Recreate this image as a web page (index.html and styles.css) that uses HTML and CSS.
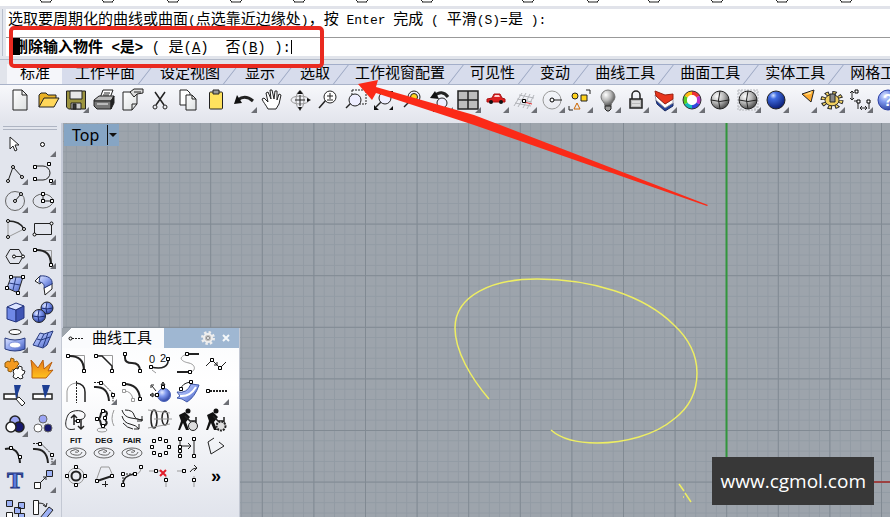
FILE: index.html
```
<!DOCTYPE html>
<html lang="zh-CN">
<head>
<meta charset="utf-8">
<title>Top</title>
<link rel="stylesheet" href="styles.css">
</head>
<body>
<svg class="defs" aria-hidden="true">
  <defs>
    <linearGradient id="blue" x1="0" y1="0" x2="1" y2="1"><stop offset="0" stop-color="#dfe6ff"/><stop offset=".5" stop-color="#8fa4ee"/><stop offset="1" stop-color="#3c56b8"/></linearGradient>
    <radialGradient id="ball" cx=".35" cy=".3" r=".75"><stop offset="0" stop-color="#e4eaff"/><stop offset=".4" stop-color="#7f98ee"/><stop offset="1" stop-color="#2a3f9c"/></radialGradient>
    <radialGradient id="deep" cx=".35" cy=".25" r=".8"><stop offset="0" stop-color="#cfe0ff"/><stop offset=".25" stop-color="#3f6be0"/><stop offset="1" stop-color="#06186e"/></radialGradient>
    <radialGradient id="gray" cx=".35" cy=".3" r=".75"><stop offset="0" stop-color="#fff"/><stop offset=".5" stop-color="#b5b5b5"/><stop offset="1" stop-color="#444"/></radialGradient>
    <linearGradient id="fire" x1="0" y1="0" x2="0" y2="1"><stop offset="0" stop-color="#e8791a"/><stop offset="1" stop-color="#ffc21c"/></linearGradient>
    <linearGradient id="paper" x1="0" y1="0" x2="1" y2="1"><stop offset="0" stop-color="#fff"/><stop offset="1" stop-color="#dcdfe0"/></linearGradient>
  </defs>
</svg>

<div class="menubar">
  <svg width="890" height="6" aria-hidden="true">
    <g id="m"><path d="M40 0l2 2M52 0l-2 2M41 2h10" /></g>
    <use href="#m" x="62"/><use href="#m" x="127"/><use href="#m" x="190"/><use href="#m" x="253"/><use href="#m" x="316"/><use href="#m" x="381"/><use href="#m" x="482"/><use href="#m" x="547"/><use href="#m" x="608"/><use href="#m" x="671"/><use href="#m" x="736"/><use href="#m" x="800"/>
  </svg>
</div>

<section class="command">
  <p class="history">选取要周期化的曲线或曲面<i>(</i>点选靠近边缘处<i>)</i>，按<i> Enter </i>完成<i> ( </i>平滑<i>(S)=</i>是<i> ):</i></p>
  <div class="prompt">
    <label for="cmd"><b><mark>删</mark>除输入物件<i> &lt;</i>是<i>&gt;</i></b></label><span class="opts"><i> ( </i><a href="#">是<i>(<u>A</u>)</i></a><i>  </i><a href="#">否<i>(<u>B</u>)</i></a><i> ):</i></span><span class="caret"></span>
    <input id="cmd" type="text">
  </div>
  <div class="callout"></div>
</section>

<nav class="tabs">
  <a class="on" href="#">标准</a><a href="#">工作平面</a><a href="#">设定视图</a><a href="#">显示</a><a href="#">选取</a><a href="#">工作视窗配置</a><a href="#">可见性</a><a href="#">变动</a><a href="#">曲线工具</a><a href="#">曲面工具</a><a href="#">实体工具</a><a href="#">网格工具</a>
</nav>

<div class="toolbar">
  <button aria-label="新建"><svg viewBox="0 0 28 28"><path fill="url(#paper)" d="M7 4h9l5 5v15H7z"/><path d="M16 4v5h5"/></svg></button>
  <button aria-label="打开"><svg viewBox="0 0 28 28"><path fill="#e9b125" d="M5 21V9l2-2h5l2 2h8v4"/><path fill="#ffd75a" d="M5 21l5-9h15l-5 9z"/></svg></button>
  <button class="fly" aria-label="保存"><svg viewBox="0 0 28 28"><path fill="#9c9440" d="M4.500 5h19v18h-17l-2-2z"/><path fill="#e8e8e8" d="M8 5h12v8H8z"/><path fill="#ccc" d="M9 17h10v6H9z"/><path fill="#333" d="M11 18h3v5h-3z"/></svg></button>
  <button aria-label="打印"><svg viewBox="0 0 28 28"><path fill="#fff" d="M10 12l3-8h10l-3 8z"/><path fill="#bbb" d="M4 14l5-4h15l-3 5H4z"/><path fill="#777" d="M4 15h17v8H7l-3-3z"/><path fill="#222" d="M21 15l3-5v7l-3 6z"/><path stroke="#fff" d="M7 18h11"/><path d="M14 7h6M13 9h6"/></svg></button>
  <button aria-label="属性"><svg viewBox="0 0 28 28"><path fill="url(#paper)" d="M5 6h14v12l-5 6H5z"/><path d="M14 24v-6h5"/><path fill="#ddd" d="M12 6l4-3h9v4l-6 1-3 3z"/><path d="M16 6h7"/></svg></button>
  <button aria-label="剪切"><svg viewBox="0 0 28 28"><path class="t" d="M9 6l9 13M19 6l-9 13"/><circle cx="9" cy="21" r="2"/><circle cx="19" cy="21" r="2"/></svg></button>
  <button aria-label="复制"><svg viewBox="0 0 28 28"><path fill="#fff" d="M6 4h7l3 3v12H6z"/><path fill="url(#paper)" d="M12 9h6l4 4v11H12z"/><path d="M18 9v4h4"/></svg></button>
  <button aria-label="粘贴"><svg viewBox="0 0 28 28"><rect x="7.500" y="6" width="13" height="17" rx="1" fill="#ffe25e"/><path fill="#999" d="M11 4h6v4h-6z"/></svg></button>
  <button class="fly" aria-label="撤销"><svg viewBox="0 0 28 28"><path class="t3" d="M8 14q7-6 15 1"/><path class="f" d="M4 18l3-9 5 8z"/></svg></button>
  <button aria-label="平移"><svg viewBox="0 0 28 28"><path fill="#fff" d="M10 23c-2-4-5-7-6-10l2-1 4 4-2-9 2-1 3 7-1-9h2l2 9 1-8h2v9l2-6 2 1-2 9-3 5z"/></svg></button>
  <button aria-label="旋转"><svg viewBox="0 0 28 28"><ellipse class="g" cx="14" cy="14" rx="9" ry="4"/><ellipse class="g" cx="14" cy="14" rx="4" ry="9"/><path d="M14 9v11M9 14h10"/><path class="f" d="M14 4l3 4h-6zM25 14l-4 2v-4zM14 25l-2-4h4z"/></svg></button>
  <button aria-label="缩放"><svg viewBox="0 0 28 28"><path class="t" d="M5 22l7-8"/><circle cx="16" cy="11" r="6" fill="#fff"/><path d="M13 10h6M16 7v6M13 14h6"/></svg></button>
  <button aria-label="框选缩放"><svg viewBox="0 0 28 28"><path class="d" d="M10 4h14v14H10z"/><path class="t" d="M4 22l6-6"/><circle cx="13" cy="14" r="6" fill="#eef"/></svg></button>
  <button aria-label="缩放至最大范围"><svg viewBox="0 0 28 28"><path class="t" d="M6 21l7-7"/><circle cx="15" cy="12" r="6" fill="#eef"/><path class="f" d="M4 24v-5l5 5zM23 5v5l-5-5zM23 24h-4l4-4z"/></svg></button>
  <button aria-label="缩放至选取物件"><svg viewBox="0 0 28 28"><path class="t" d="M6 21l7-7"/><circle cx="16" cy="11" r="6" fill="#eef"/><circle cx="16" cy="11" r="3.500" fill="#ffd21c"/></svg></button>
  <button class="fly" aria-label="还原视图"><svg viewBox="0 0 28 28"><path class="t3" d="M8 10q8-7 14 1"/><path class="f" d="M4 12l5-7 4 8z"/><circle cx="16" cy="17" r="5" fill="#eef"/><path d="M12 21l-5 5"/></svg></button>
  <button class="fly" aria-label="四个工作视窗"><svg viewBox="0 0 28 28"><path class="t" fill="#bdbdbd" d="M4 5h20v18H4zM14 5v18M4 14h20"/></svg></button>
  <button class="fly" aria-label="车辆"><svg viewBox="0 0 28 28"><path fill="#dc2020" stroke="#a11" d="M5 16v-3l5-1 2-4h6l2 4 3 1v3z"/><path fill="#fcc" stroke="none" d="M12 11l1-2h4l1 2z"/><circle class="f" cx="9" cy="16" r="2"/><circle class="f" cx="19" cy="16" r="2"/></svg></button>
  <button class="fly" aria-label="工作平面"><svg viewBox="0 0 28 28"><path stroke="#b3b5ba" d="M4 20L12 7M8 21l8-14M13 22l7-14M17 23l7-14M9 9l15 3M7 13l15 3M5 17l16 3"/><path stroke="#d33" d="M14 16l8 2"/><path class="p" d="M12.500 13.500h3v3h-3z"/></svg></button>
  <button class="fly" aria-label="圆"><svg viewBox="0 0 28 28"><circle class="g" cx="14" cy="14" r="9"/><path d="M14 14h10"/><circle class="p" cx="14" cy="14" r="2"/></svg></button>
  <button class="fly" aria-label="选取"><svg viewBox="0 0 28 28"><circle cx="9" cy="10" r="3" fill="#ffd21c"/><path fill="#ffd21c" d="M15 9h6v6h-6z"/><path stroke="#c60" d="M11 17l3 6H8z"/><path d="M20 4h4v4M3 20v4h4"/></svg></button>
  <button class="fly" aria-label="隐藏"><svg viewBox="0 0 28 28"><path fill="url(#gray)" stroke="#777" d="M11 20c0-4-4-5-4-9a7 7 0 0 1 14 0c0 4-4 5-4 9z"/><path fill="#999" d="M11 20h6v3l-2 2h-2l-2-2z"/></svg></button>
  <button class="fly" aria-label="锁定"><svg viewBox="0 0 28 28"><path class="t" d="M10 13V9a4 4 0 0 1 8 0v4"/><path class="t" fill="#bbb" d="M8 13h12v9H8z"/><path stroke="#fff" d="M10 16h8M10 19h8"/></svg></button>
  <button class="fly" aria-label="图层"><svg viewBox="0 0 28 28"><path fill="#24439c" stroke="#1b2b60" d="M6 14l9 8 8-5v3l-8 5-8-7z"/><path fill="#fff" stroke="#99a" d="M5 9l10 9 8-5v4l-8 5-9-8z"/><path fill="#e8351d" stroke="#9b2010" d="M5 5l10 4 8-1v5l-8 5L6 10z"/></svg></button>
  <button class="fly" aria-label="颜色"><svg class="wheel" viewBox="0 0 28 28"><path stroke="#e33" d="M14 7a7 7 0 0 1 6 3.500"/><path stroke="#b3c" d="M20 10.500a7 7 0 0 1 0 7"/><path stroke="#34d" d="M20 17.500a7 7 0 0 1-6 3.500"/><path stroke="#1bb" d="M14 21a7 7 0 0 1-6-3.500"/><path stroke="#5c2" d="M8 17.500a7 7 0 0 1 0-7"/><path stroke="#fb1" d="M8 10.500a7 7 0 0 1 6-3.500"/><circle cx="14" cy="14" r="5" fill="#fff" stroke="none"/><circle class="rim" cx="14" cy="14" r="9"/></svg></button>
  <button aria-label="着色"><svg viewBox="0 0 28 28"><circle cx="14" cy="14" r="9" fill="url(#gray)"/><path d="M5 14q9 3 18 0M14 5q-3 9 0 18"/></svg></button>
  <button class="fly" aria-label="半透明"><svg viewBox="0 0 28 28"><path class="d" stroke="#b5b7bc" d="M4 4h20v20H4zM4 7h20M4 21h20M7 4v20M21 4v20"/><circle cx="14" cy="14" r="9" fill="url(#gray)"/><path d="M5 14q9 3 18 0M14 5q-3 9 0 18"/></svg></button>
  <button class="fly" aria-label="渲染"><svg viewBox="0 0 28 28"><circle cx="14" cy="14" r="9" fill="url(#deep)"/></svg></button>
  <button class="fly" aria-label="灯光"><svg viewBox="0 0 28 28"><path fill="#ffab2e" d="M12 8l12-4-3 12z"/><path fill="#ffe08a" stroke="none" d="M14 9l8-4-1 3z"/></svg></button>
  <button class="fly" aria-label="选项"><svg viewBox="0 0 28 28"><g transform="translate(0 3) scale(1 .8)"><circle cx="14" cy="14" r="9" stroke="#222" stroke-width="5" stroke-dasharray="4 3.070"/><circle cx="14" cy="14" r="9" stroke="#f3d568" stroke-width="3" stroke-dasharray="2 5.070" stroke-dashoffset="-1"/><circle cx="14" cy="14" r="7" fill="#f0cf60"/></g><path fill="#888" d="M12 8h5v8h-5z"/></svg></button>
  <button class="fly" aria-label="尺寸标注"><svg viewBox="0 0 28 28"><path d="M6 5v9M4 7l2-2 2 2M4 12l2 2 2-2M8 15h4v8M23 15v8M14 22h7M16 20l-2 2 2 2M19 20l2 2-2 2"/><path class="p" d="M9 4h3v3H9zM11 14h3v3h-3zM21 14h3v3h-3z"/></svg></button>
  <button aria-label="说明"><svg viewBox="0 0 28 28"><circle cx="14" cy="14" r="10" fill="url(#ball)" stroke="#2b3fa5"/><text class="help" x="14" y="20">?</text></svg></button>
</div>

<main class="work">
  <aside class="side">
    <button aria-label="选取"><svg viewBox="0 0 28 28"><path fill="#fff" d="M9 7v12l3-3 2 5 2-1-2-5h4z"/></svg></button>
    <button class="fly" aria-label="点"><svg viewBox="0 0 28 28"><circle class="p" cx="13.500" cy="14.500" r="2"/></svg></button>
    <button class="fly" aria-label="多重直线"><svg viewBox="0 0 28 28"><path d="M7 23l5-14 9 10"/><circle class="p" cx="7" cy="23" r="1.500"/><circle class="p" cx="12" cy="9" r="1.500"/><circle class="p" cx="21" cy="19" r="1.500"/></svg></button>
    <button class="fly" aria-label="曲线"><svg viewBox="0 0 28 28"><path d="M6 8h8a7 7 0 0 1 0 14H6"/><path class="p" d="M4.500 7.500h3v3h-3zM18.500 4.500h3v3h-3zM4.500 19.500h3v3h-3zM20.500 21.500h3v3h-3z"/></svg></button>
    <button class="fly" aria-label="圆"><svg viewBox="0 0 28 28"><circle class="m" cx="14" cy="15" r="9.500"/><path d="M14 15l6-7"/><circle class="p" cx="14" cy="15" r="1.500"/><circle class="p" cx="20" cy="8" r="1.500"/></svg></button>
    <button class="fly" aria-label="椭圆"><svg viewBox="0 0 28 28"><ellipse class="m" cx="14" cy="15" rx="10" ry="7"/><path d="M14 8v7h9"/><path class="p" d="M12.500 6.500h3v3h-3zM12.500 13.500h3v3h-3zM21.500 13.500h3v3h-3z"/></svg></button>
    <button class="fly" aria-label="圆弧"><svg viewBox="0 0 28 28"><path class="g" d="M23 15L7 23V7"/><path class="t" d="M7 7q12 0 16 8"/><circle class="p" cx="7" cy="7" r="1.500"/><circle class="p" cx="23" cy="15" r="1.500"/><circle class="p" cx="7" cy="23" r="1.500"/></svg></button>
    <button class="fly" aria-label="矩形"><svg viewBox="0 0 28 28"><path d="M5.500 9.500h17v11h-17z"/><circle class="p" cx="22.500" cy="9.500" r="1.500"/><circle class="p" cx="5.500" cy="20.500" r="1.500"/></svg></button>
    <button class="fly" aria-label="多边形"><svg viewBox="0 0 28 28"><path d="M5 14.500l4-7h9l4 7-4 7H9zM13 14.500h9"/><circle class="p" cx="13" cy="14.500" r="1.500"/><circle class="p" cx="22" cy="14.500" r="1.500"/></svg></button>
    <button class="fly" aria-label="圆角"><svg viewBox="0 0 28 28"><path class="g" d="M6 8.500h16.500V23"/><path class="t2" d="M6 8q16-1 16 15"/><path class="p" d="M4.500 6.500h3v3h-3zM20.500 21.500h3v3h-3z"/></svg></button>
    <button class="fly" aria-label="曲面"><svg viewBox="0 0 28 28"><path fill="url(#blue)" d="M10 7h12l-5 16-11-5z"/><path stroke="#26397c" d="M8 13l11 2M15 7l-3 13"/><path class="p" d="M8.500 5.500h3v3h-3zM20.500 5.500h3v3h-3zM15.500 21.500h3v3h-3zM4.500 16.500h3v3h-3z"/></svg></button>
    <button class="fly" aria-label="挤出曲面"><svg viewBox="0 0 28 28"><path fill="#fff" d="M6 11l5-5 3 1-3 7zM15 18l8-5v6l-7 6z"/><path fill="url(#blue)" stroke="#26397c" d="M11 6c8-1 13 3 12 8l-8 4c1-4-2-6-5-6z"/></svg></button>
    <button class="fly" aria-label="立方体"><svg viewBox="0 0 28 28"><path fill="#6f88e6" stroke="#24357f" d="M6 9l9 3v12l-9-3z"/><path fill="#dce4ff" stroke="#24357f" d="M6 9l9-4 8 3-8 4z"/><path fill="#4055b4" stroke="#24357f" d="M15 12l8-4v12l-8 4z"/></svg></button>
    <button class="fly" aria-label="球体"><svg viewBox="0 0 28 28"><circle cx="18" cy="10" r="6" fill="url(#ball)"/><circle cx="10" cy="18" r="6.500" fill="url(#ball)"/><path stroke="#1b2b70" d="M4 18q6 2 13 0M10 12q-2 6 0 12M12 10q6 2 12 0M18 4q-2 6 0 12"/></svg></button>
    <button class="fly" aria-label="实体编辑"><svg viewBox="0 0 28 28"><ellipse cx="14" cy="6" rx="6" ry="2.500" fill="#fff"/><path fill="url(#blue)" stroke="#26397c" d="M4 12q10 4 20 0v11q-10 4-20 0z"/><ellipse cx="14" cy="19" rx="6" ry="3" fill="#fff" stroke="#7a8ed8"/></svg></button>
    <button class="fly" aria-label="曲面编辑"><svg viewBox="0 0 28 28"><path fill="url(#blue)" stroke="#26397c" d="M4 19l7-12 4 1 9-3-6 14-4 3z"/><path stroke="#26397c" d="M8 13l4 1 9-3M9 20l6-12M14 21l5-14"/></svg></button>
    <button aria-label="组合"><svg viewBox="0 0 28 28"><path fill="#f39a21" stroke="#8b5a10" d="M4 9l3-2 2 1 1-4 3 1v3l3-1 2 3-2 2 1 4-3 1-2-2-2 3-3-1v-3l-3-1z"/><path fill="#fff" d="M12 17l3-3 2 1 1-3 3 1v3l3 1-1 3-2 1 1 3-3 1-2-2-2 2-3-2 1-3z"/></svg></button>
    <button aria-label="炸开"><svg viewBox="0 0 28 28"><path fill="url(#fire)" stroke="#b85f10" d="M3 24V14l-1-8 7 8 5-8 1 9 8-7-4 9 5-1-7 8z"/></svg></button>
    <button aria-label="修剪"><svg viewBox="0 0 28 28"><path class="t" fill="#fff" d="M3 12h13v5H3z"/><path fill="#fff" d="M15 17l3-2 6 6-3 3z"/><path fill="#1d3f94" stroke="none" d="M13 3h7l-5 14z"/></svg></button>
    <button aria-label="分割"><svg viewBox="0 0 28 28"><path class="t" fill="#fff" d="M4 12h19v5H4z"/><path fill="#1d3f94" stroke="none" d="M13 3h8l-5 14z"/></svg></button>
    <button class="fly" aria-label="群组"><svg viewBox="0 0 28 28"><g class="t"><circle cx="14" cy="11" r="5" fill="#9aa4f4"/><circle cx="18" cy="17" r="5" fill="#17186e"/><circle cx="10" cy="17" r="5" fill="#fff"/></g></svg></button>
    <button aria-label="解散群组"><svg viewBox="0 0 28 28"><g class="m"><circle cx="14" cy="9" r="4" fill="#9aa4f4"/><circle cx="9" cy="18" r="4" fill="#fff"/><circle cx="19" cy="18" r="4" fill="#17186e"/></g></svg></button>
    <button aria-label="编辑点"><svg viewBox="0 0 28 28"><path class="t2" d="M4 11q14-3 15 14"/><path class="p" d="M8.500 8.500h3v3h-3zM17.500 17.500h3v3h-3z"/></svg></button>
    <button class="fly" aria-label="控制点"><svg viewBox="0 0 28 28"><path class="t2" d="M4 11q14-1 15 14"/><path class="d" d="M4 5.500h8l11 11v8"/><path class="p" d="M9.500 4.500h3v3h-3zM21.500 15.500h3v3h-3z"/></svg></button>
    <button aria-label="文字"><svg viewBox="0 0 28 28"><text class="tt" x="14" y="22">T</text></svg></button>
    <button class="fly" aria-label="移动"><svg viewBox="0 0 28 28"><path d="M11 17l6-6M14 11h3v3"/><path fill="#9db1f4" d="M17.500 4.500h6v6h-6z"/><path fill="#fff" d="M5.500 16.500h6v6h-6z"/></svg></button>
    <button aria-label="阵列"><svg viewBox="0 0 28 28"><g fill="#9db1f4"><path d="M5.500 6.500h6v6h-6zM17.500 8.500h6v6h-6zM13.500 13.500h6v6h-6zM17.500 19.500h6v6h-6z"/></g><path fill="#fff" d="M5.500 18.500h6v6h-6z"/></svg></button>
    <button aria-label="定位"><svg viewBox="0 0 28 28"><path fill="#fff" d="M4.500 6.500h5v14h-5z"/><path d="M9 9q7 0 8 4M14 11l3 2 1-4"/><path fill="#9db1f4" d="M11 24l9-11 4 3-9 11z"/></svg></button>
  </aside>

  <div class="viewport">
    <svg class="canvas" aria-hidden="true">
      <defs>
        <pattern id="minor" x="44" y="49" width="10.320" height="10.320" patternUnits="userSpaceOnUse"><path d="M0 .5h11M.5 0v11"/></pattern>
        <pattern id="major" x="44" y="49" width="51.600" height="51.600" patternUnits="userSpaceOnUse"><path d="M0 .5h52M.5 0v52"/></pattern>
      </defs>
      <rect width="100%" height="100%" fill="url(#minor)"/>
      <rect width="100%" height="100%" fill="url(#major)"/>
      <path class="axis-y" d="M663.500 0v359"/>
      <path class="axis-x" d="M663 359h2000"/>
      <path class="curve" d="M426 276C408 255 392 228 392 205C392 172 430 156 474 156C528 156 581 172 611 202C626 216 634 233 634 250C634 268 627 284 611 296C592 312 562 320 534 320C512 320 497 315 488 307"/>
      <path class="curve" d="M616 361l5 7M622 370l6 9M620 374h1"/>
    </svg>
    <button class="view">Top<span></span></button>
    <div class="mark">www.cgmol.com</div>
  </div>

  <section class="panel">
    <header>
      <h2><svg viewBox="0 0 16 8"><path class="d" d="M4 4.500h12"/><circle class="p" cx="2.500" cy="4.500" r="1.500"/></svg>曲线工具</h2>
      <button aria-label="选项"><svg viewBox="0 0 14 14"><circle cx="7" cy="7" r="5.500" stroke="#eee" stroke-width="3" stroke-dasharray="2.300 2"/><circle cx="7" cy="7" r="4" fill="#bbb" stroke="#eee" stroke-width="2"/><circle cx="7" cy="7" r="1.500" fill="#fff" stroke="#888"/></svg></button>
      <button aria-label="关闭"><svg viewBox="0 0 14 14"><path stroke="#f4f7fa" stroke-width="2" d="M4 4l6 6M10 4l-6 6"/></svg></button>
    </header>
    <div class="grid">
      <button aria-label="圆角"><svg viewBox="0 0 28 28"><path class="g" d="M6 5.500h16.500V21"/><path class="t2" d="M6 6q16-1 16 15"/><path class="p" d="M4.500 4.500h3v3h-3zM20.500 19.500h3v3h-3z"/></svg></button>
      <button aria-label="斜角"><svg viewBox="0 0 28 28"><path class="g" d="M6 5.500h16.500V21"/><path class="t" d="M6 6h6l10 10v5"/><path class="p" d="M4.500 4.500h3v3h-3zM20.500 19.500h3v3h-3z"/></svg></button>
      <button aria-label="混接"><svg viewBox="0 0 28 28"><path class="t2" d="M7 4v4q0 5 7 5 8 0 8 8"/><path class="p" d="M5.500 2.500h3v3h-3zM20.500 19.500h3v3h-3z"/></svg></button>
      <button aria-label="可调式混接"><svg viewBox="0 0 28 28"><path class="t" d="M5 17c12 3 18-1 17-8"/><path class="g" d="M6 20l4 3"/><path class="p" d="M3.500 15.500h3v3h-3zM20.500 7.500h3v3h-3z"/><text x="6" y="13">0</text><text x="17" y="12">2</text></svg></button>
      <button aria-label="弧形混接"><svg viewBox="0 0 28 28"><path class="g" d="M13 4c-11 4-4 8 2 9 8 2 6 9 1 9"/><path class="t2" d="M14 4h11M3 22h12"/><path class="p" d="M11.500 2.500h3v3h-3zM14.500 20.500h3v3h-3z"/></svg></button>
      <button aria-label="衔接"><svg viewBox="0 0 28 28"><path d="M4 16l6-6 8 8 6-6M15 12v3h-3"/><path class="p" d="M8.500 8.500h3v3h-3zM16.500 16.500h3v3h-3z"/></svg></button>

      <button aria-label="对称"><svg viewBox="0 0 28 28"><path class="g" d="M5 24V13q1-7 9-8"/><path class="t" d="M14 5q9 1 9 9v10"/><path class="d" d="M14.500 3v22"/></svg></button>
      <button class="fly" aria-label="控制点曲线"><svg viewBox="0 0 28 28"><path class="t2" d="M4 9q14-1 15 14"/><path class="d" d="M4 4.500h8l11 11v8"/><path class="p" d="M9.500 3.500h3v3h-3zM21.500 15.500h3v3h-3z"/></svg></button>
      <button aria-label="偏移"><svg viewBox="0 0 28 28"><path class="t2" d="M6 6q15 0 16 15"/><path class="g" d="M6 13q8 0 9 9"/><path class="p" d="M4.500 4.500h3v3h-3zM20.500 19.500h3v3h-3z"/><path class="p g" d="M4.500 11.500h3v3h-3zM13.500 20.500h3v3h-3z"/></svg></button>
      <button aria-label="偏移曲面上的曲线"><svg viewBox="0 0 28 28"><circle cx="18" cy="17" r="6.500" fill="url(#ball)" stroke="#4b63ba"/><path d="M4 17h7M17 12V5M10 13L6 8M4 17l3-2v4zM17 4l-2 3h4zM5 7h3M5 7v3"/><path class="p" d="M9.500 15.500h3v3h-3zM15.500 7.500h3v3h-3z"/></svg></button>
      <button aria-label="曲面"><svg viewBox="0 0 28 28"><path fill="url(#blue)" stroke="#3e57a8" d="M3 14q10 2 14-8l8 1q-4 12-12 17-5-4-10-4l3-2z"/><path stroke="#fff" class="t2" d="M6 18q10 1 16-9"/><path d="M7 11q1-6 10-7"/><path class="p" d="M5.500 9.500h3v3h-3zM15.500 2.500h3v3h-3z"/></svg></button>
      <button class="fly" aria-label="延伸"><svg viewBox="0 0 28 28"><path class="d t2" d="M8 13h17"/><path class="p" d="M4.500 11.500h3v3h-3z"/></svg></button>

      <button aria-label="周期化"><svg viewBox="0 0 28 28"><path d="M13 23C1 26 3 15 6 9S24 3 23 10c-1 4-4 3-7 4"/><path class="t" d="M12 19V9M9 12l3-3 3 3M19 13v9M16 20l3 3 3-3M12 15h5"/><path class="p" d="M14.500 13.500h3v3h-3z"/></svg></button>
      <button aria-label="镜像"><svg viewBox="0 0 28 28"><path class="t2" d="M14 5c-6 2-1 6-6 8 5 2 0 6 6 8M15 5q4 2 0 6M15 14q4 3-1 6"/><path class="g" d="M24 4q-4 9 0 16"/><ellipse class="g" cx="12" cy="24" rx="5" ry="2"/><path class="p" d="M11.500 3.500h3v3h-3zM5.500 11.500h3v3h-3zM11.500 18.500h3v3h-3zM13.500 10.500h3v3h-3z"/></svg></button>
      <button aria-label="断面线"><svg viewBox="0 0 28 28"><path d="M4 4q2 7 9 8t11 2M4 10q2 7 8 8t9 5M7 4q8 0 9 5t9 5M24 10v5h-5M21 18v5h-5M5 17q4 5 10 6"/></svg></button>
      <button aria-label="均分曲线"><svg viewBox="0 0 28 28"><ellipse class="t" cx="8" cy="13" rx="3" ry="9"/><ellipse class="t" cx="19" cy="12" rx="3" ry="7"/><path class="g" d="M2 4l22 3M2 22l22-4M8 13h18"/></svg></button>
      <button aria-label="重建"><svg viewBox="0 0 28 28"><circle class="f" cx="14" cy="5" r="2.500"/><path class="f" d="M5 9l6-3 5 5-4 5 3 8h-3l-3-7-3 7H4l3-9z"/><path class="t" d="M11 10l5 5h6M22 11v7"/><circle cx="19" cy="20" r="4.500" fill="#ddd"/></svg></button>
      <button aria-label="主曲线重建"><svg viewBox="0 0 28 28"><circle class="f" cx="14" cy="5" r="2.500"/><path class="f" d="M5 9l6-3 5 5-4 5 3 8h-3l-3-7-3 7H4l3-9z"/><path class="t" d="M11 10l5 5h6M22 11v7"/><circle class="d t2" cx="19" cy="20" r="4.500" fill="#ddd"/></svg></button>

      <button aria-label="FIT"><svg viewBox="0 0 28 28"><text class="cap" x="14" y="9">FIT</text><ellipse class="m" cx="14" cy="19" rx="10" ry="5"/><path class="m" d="M20 18q-1 4-7 3t-4-4q5-3 8 0-1 2-4 1"/></svg></button>
      <button aria-label="DEG"><svg viewBox="0 0 28 28"><text class="cap" x="14" y="9">DEG</text><ellipse class="m" cx="14" cy="19" rx="10" ry="5"/><path class="m" d="M20 18q-1 4-7 3t-4-4q5-3 8 0-1 2-4 1"/></svg></button>
      <button aria-label="FAIR"><svg viewBox="0 0 28 28"><text class="cap" x="14" y="9">FAIR</text><ellipse class="m" cx="14" cy="19" rx="10" ry="5"/><path class="m" d="M20 18q-1 4-7 3t-4-4q5-3 8 0-1 2-4 1"/></svg></button>
      <button aria-label="封闭"><svg viewBox="0 0 28 28"><path class="p" d="M12.500 3.500h3v3h-3zM18.500 5.500h3v3h-3zM21.500 11.500h3v3h-3zM18.500 17.500h3v3h-3zM12.500 19.500h3v3h-3zM6.500 17.500h3v3h-3zM4.500 11.500h3v3h-3zM6.500 5.500h3v3h-3z"/></svg></button>
      <button aria-label="参数均匀化"><svg viewBox="0 0 28 28"><path d="M6 5v17M20 5v17M8 12h9M14 9l3 3-3 3"/><path class="p" d="M4.500 3.500h3v3h-3zM4.500 11.500h3v3h-3zM4.500 15.500h3v3h-3zM4.500 20.500h3v3h-3zM18.500 3.500h3v3h-3zM18.500 20.500h3v3h-3z"/></svg></button>
      <button aria-label="简化"><svg viewBox="0 0 28 28"><path d="M12 4L6 8l3 12 13-8-5-4"/></svg></button>

      <button aria-label="插入节点"><svg viewBox="0 0 28 28"><circle class="t2" cx="14" cy="14" r="4.500"/><circle class="g" cx="14" cy="14" r="8"/><path class="p" d="M12.500 3.500h3v3h-3zM12.500 21.500h3v3h-3zM3.500 12.500h3v3h-3zM21.500 12.500h3v3h-3z"/></svg></button>
      <button aria-label="插入锐角点"><svg viewBox="0 0 28 28"><path class="g" d="M6 19l5-14h8l4 9"/><path class="t2" d="M7 19l15-5"/><path d="M15.500 19v6M12 22.500h6"/><path class="p" d="M5.500 17.500h3v3h-3zM20.500 12.500h3v3h-3z"/></svg></button>
      <button aria-label="插入控制杆"><svg viewBox="0 0 28 28"><path class="d" d="M5 12v11M5 12h12"/><path class="t" d="M5 23q0-10 12-11"/><path class="g" d="M17 12q6 0 6-7"/><path class="p" d="M3.500 10.500h3v3h-3zM3.500 21.500h3v3h-3zM15.500 10.500h3v3h-3zM21.500 3.500h3v3h-3z"/></svg></button>
      <button aria-label="移除点"><svg viewBox="0 0 28 28"><path class="g" d="M3 9h12M20 14v11"/><path stroke="#e11d2a" stroke-width="2" d="M14 8l6 6M20 8l-6 6"/><path class="p" d="M8.500 7.500h3v3h-3zM18.500 16.500h3v3h-3z"/></svg></button>
      <button aria-label="移动点"><svg viewBox="0 0 28 28"><path class="g" d="M3 9h9M20 14v11"/><path d="M16 10q2-4 7-4M20 3l3 3-3 3"/><path class="p" d="M8.500 7.500h3v3h-3zM18.500 16.500h3v3h-3z"/></svg></button>
      <button class="more" aria-label="更多">»</button>
    </div>
  </section>
</main>

<svg class="arrow" width="360" height="140" viewBox="355 75 360 140" aria-hidden="true"><path d="M358 84l20-4-2 7 98 28 234 90-1 1-233-81-98-32-4 7z"/></svg>
</body>
</html>
```
FILE: styles.css
```
* { box-sizing: border-box; }

body {
  margin: 0;
  height: 100vh;
  display: flex;
  flex-direction: column;
  overflow: hidden;
  position: relative;
  background: #e4e7ee;
  color: #000;
  font: 15px/20px "Liberation Sans", "Noto Sans CJK SC", sans-serif;
}

a { color: inherit; text-decoration: none; }

button {
  position: relative;
  padding: 0;
  border: 0;
  background: none;
  font: inherit;
  color: inherit;
}

svg {
  display: block;
  fill: none;
  stroke: #222;
  stroke-width: 1;
}

.defs { position: absolute; width: 0; height: 0; }

/* icon strokes */
.t { stroke-width: 1.5; }
.t2 { stroke-width: 2; }
.t3 { stroke-width: 3; }
.p { fill: #fff; stroke: #000; }
.g { stroke: #999; }
.m { stroke: #666; }
.d { stroke-dasharray: 2 1; }
.f { fill: #111; stroke: none; }
.wheel path { stroke-width: 4; }
.wheel .rim { stroke: #333; }

svg text {
  fill: #111;
  stroke: none;
  font-size: 11px;
  text-anchor: middle;
}
svg .cap { font-size: 8px; font-weight: bold; }
svg .help { fill: #fff; font-size: 17px; font-weight: bold; }
svg .tt {
  fill: #5b7be0;
  stroke: #24357f;
  font: bold 24px "Liberation Serif", serif;
}

.menubar {
  height: 9px;
  flex: none;
  background: #fff;
  border-bottom: 3px solid #e1e3ea;
}

/* command line */
.command {
  position: relative;
  flex: none;
  margin-left: 6px;
  background: #fff;
  box-shadow: -3px 0 0 #e4e7ee, -4px 0 0 #b9bfcc;
}
.command i {
  font: 13px "Liberation Mono", monospace;
  white-space: pre;
}
.history {
  height: 29px;
  margin: 0;
  padding-left: 2px;
  border-bottom: 1px solid #999;
  white-space: nowrap;
}
.prompt {
  height: 18px;
  padding-left: 7px;
  display: flex;
  align-items: center;
  line-height: 18px;
  white-space: nowrap;
}
.prompt b { font-weight: 700; }
.prompt i { font-size: 14px; }
.prompt b i { font-weight: 700; }
.prompt mark {
  background: linear-gradient(90deg, #000 50%, transparent 50%);
  color: #000;
}
.prompt input {
  flex: 1;
  min-width: 0;
  height: 16px;
  padding: 0;
  border: 0;
  outline: 0;
  background: none;
}
.caret { width: 1px; height: 14px; background: #000; }
.callout {
  position: absolute;
  left: 3px;
  top: 17px;
  width: 315px;
  height: 42px;
  border: 4px solid #e92a20;
  border-radius: 5px;
  z-index: 3;
}

/* toolbar tabs */
.tabs {
  height: 29px;
  flex: none;
  display: flex;
  padding: 8px 0 0 7px;
  overflow: hidden;
  white-space: nowrap;
  background: linear-gradient(#e1e4eb 3px, #b4bbca 3px, #b4bbca 4px, #e1e4eb 4px);
  border-bottom: 1px solid #a8b2c8;
}
.tabs a {
  position: relative;
  flex: none;
  padding: 0 12px 0 13px;
  line-height: 16px;
  z-index: 0;
  background: #d7dcec;
  border-top: 1px solid #a3aec9;
}
.tabs a::before {
  content: "";
  position: absolute;
  z-index: -1;
  left: -2px;
  top: 0;
  width: 12px;
  height: 20px;
  background: #d7dcec;
  border-left: 1px solid #98a4c0;
  transform: skewX(-38deg);
}
.tabs .on { background: #f5f6fa; border-color: #f5f6fa; }
.tabs .on::before, .tabs .on + a::before { display: none; }

.toolbar {
  height: 38px;
  flex: none;
  display: flex;
  padding: 1px 0 0 6px;
  overflow: hidden;
  background: linear-gradient(#f7f8fb, #e2e4ec);
}
.toolbar button, .side button, .grid button { flex: none; width: 28px; height: 28px; }
.toolbar svg, .side svg, .grid svg { width: 28px; height: 28px; }
.fly::after {
  content: "";
  position: absolute;
  right: 1px;
  bottom: 1px;
  border-left: 6px solid transparent;
  border-bottom: 6px solid #6d6f75;
}

.work {
  position: relative;
  flex: 1;
  min-height: 0;
  display: flex;
}

.side {
  flex: none;
  width: 63px;
  padding: 7px 5px 0 1px;
  display: grid;
  grid-template-columns: 28px 28px;
  grid-auto-rows: 28px;
  align-content: start;
  overflow: hidden;
  background: linear-gradient(#aeb4c2, #aeb4c2) 3px 3px / 54px 1px no-repeat,
    linear-gradient(#aeb4c2, #aeb4c2) 3px 6px / 54px 1px no-repeat,
    #e2e5ed;
  border-right: 2px solid #c4c9d6;
}

.viewport {
  position: relative;
  flex: 1;
  min-width: 0;
  overflow: hidden;
  background: #9da4ac;
}
.canvas { width: 100%; height: 100%; stroke: none; }
#minor path { stroke: #929ba4; }
#major path { stroke: #818a93; }
.axis-y { stroke: #32963c; stroke-width: 2; }
.axis-x { stroke: #9c4040; stroke-width: 2; }
.curve { stroke: #eeee62; stroke-width: 1.5; }

.view {
  position: absolute;
  left: 1px;
  top: 1px;
  height: 22px;
  padding: 0 2px 0 8px;
  display: flex;
  align-items: center;
  gap: 8px;
  background: #86a5c4;
  font: 16px/22px "Noto Sans", sans-serif;
}
.view span {
  height: 20px;
  padding: 8px 0 0 1px;
  border-left: 1px solid #111;
}
.view span::before {
  content: "";
  display: block;
  border: 4px solid transparent;
  border-top-color: #111;
  border-bottom: 0;
}

.mark {
  position: absolute;
  right: 16px;
  bottom: 12px;
  padding: 8px;
  background: #383838;
  color: #fff;
  font: 19px/32px "Open Sans", "Noto Sans", sans-serif;
}

/* floating tool palette */
.panel {
  position: absolute;
  left: 61px;
  top: 205px;
  bottom: 0;
  width: 179px;
  border: 1px solid #c3c8d3;
  border-width: 0 1px;
  background: linear-gradient(#fafbfd, #fff 30%, #e1e4ec);
}
.panel header {
  height: 20px;
  display: flex;
  align-items: center;
  gap: 4px;
  padding-right: 6px;
  background: #9fb7d2;
}
.panel h2 {
  height: 20px;
  margin: 0 auto 0 0;
  padding: 0 12px 0 6px;
  display: flex;
  align-items: center;
  gap: 8px;
  background: linear-gradient(135deg, #9da4ac 7px, #fafbfd 7px);
  font-size: 15px;
  font-weight: normal;
  line-height: 16px;
}
.panel h2 svg { width: 16px; height: 8px; }
.panel header button svg { width: 14px; height: 14px; }
.grid {
  display: grid;
  grid-template-columns: repeat(6, 28px);
  grid-auto-rows: 28px;
  padding-top: 2px;
}
.grid .more { font: bold 18px/26px "Liberation Sans", sans-serif; }

.arrow {
  position: absolute;
  left: 355px;
  top: 75px;
  z-index: 4;
  pointer-events: none;
}
.arrow path { fill: #fb2a18; stroke: none; }
```
